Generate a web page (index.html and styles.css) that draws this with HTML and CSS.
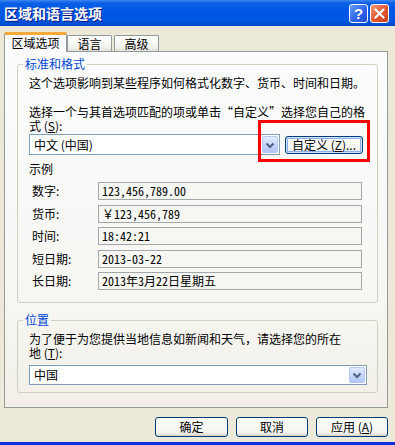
FILE: index.html
```html
<!DOCTYPE html>
<html lang="zh-CN">
<head>
  <meta charset="UTF-8" />
  <title>区域和语言选项</title>
  <link rel="stylesheet" href="styles.css">
</head>
<body>
  <div class="window">
    <div class="titlebar">
      <span class="title">区域和语言选项</span>
      <div class="title-buttons">
        <span class="tbtn help">?</span>
        <span class="tbtn close">
          <svg width="11" height="11" viewBox="0 0 11 11"><path d="M1.5 1.5 L9.5 9.5 M9.5 1.5 L1.5 9.5" stroke="#fff" stroke-width="2.2" stroke-linecap="round"/></svg>
        </span>
      </div>
    </div>

    <div class="content">
      <div class="tabs">
        <span class="tab active">区域选项</span>
        <span class="tab">语言</span>
        <span class="tab third">高级</span>
      </div>

      <div class="panel">
        <fieldset class="group first">
          <legend>标准和格式</legend>
          <p class="text">这个选项影响到某些程序如何格式化数字、货币、时间和日期。</p>
          <p class="text gap">选择一个与其首选项匹配的项或单击“自定义”选择您自己的格<br>式 (<u>S</u>):</p>
          <div class="combo-row">
            <div class="combo short">
              <span class="combo-text">中文 (中国)</span>
              <span class="arrow">
                <svg width="14" height="14" viewBox="0 0 14 14"><path d="M3.5 5.5 L7 9 L10.5 5.5" fill="none" stroke="#4d6185" stroke-width="2"/></svg>
              </span>
            </div>
            <button class="btn custom">自定义 (<u>Z</u>)...</button>
            <div class="mark"></div>
          </div>

          <div class="sample-title">示例</div>
          <div class="samples">
            <span class="label">数字:</span>
            <span class="field">123,456,789.00</span>
            <span class="label">货币:</span>
            <span class="field">￥123,456,789</span>
            <span class="label">时间:</span>
            <span class="field">18:42:21</span>
            <span class="label">短日期:</span>
            <span class="field">2013-03-22</span>
            <span class="label">长日期:</span>
            <span class="field">2013年3月22日星期五</span>
          </div>
        </fieldset>

        <fieldset class="group second">
          <legend>位置</legend>
          <p class="text">为了便于为您提供当地信息如新闻和天气，请选择您的所在<br>地 (<u>T</u>):</p>
          <div class="combo long">
            <span class="combo-text">中国</span>
            <span class="arrow">
              <svg width="14" height="14" viewBox="0 0 14 14"><path d="M3.5 5.5 L7 9 L10.5 5.5" fill="none" stroke="#4d6185" stroke-width="2"/></svg>
            </span>
          </div>
        </fieldset>
      </div>

      <div class="actions">
        <button class="btn">确定</button>
        <button class="btn">取消</button>
        <button class="btn">应用 (<u>A</u>)</button>
      </div>
    </div>
  </div>
</body>
</html>
```

FILE: styles.css
```css
body {
  margin: 0;
  font-family: "Noto Sans CJK SC", sans-serif;
  font-size: 12px;
  color: #000;
  background: #ece9d8;
}
.window {
  width: 395px;
  height: 445px;
  box-sizing: border-box;
  border-bottom: 3px solid #0831d9;
  background: #ece9d8;
  overflow: hidden;
}
.titlebar {
  height: 26px;
  display: flex;
  align-items: center;
  justify-content: space-between;
  padding: 0 6px 0 4px;
  background: linear-gradient(#3d86f4, #0a5fe4 12%, #0058e6 45%, #0055e0 80%, #0048c8);
}
.title {
  color: #fff;
  font-weight: bold;
  font-size: 14px;
  line-height: 16px;
  text-shadow: 1px 1px #0a1883;
}
.title-buttons {
  display: flex;
  gap: 2px;
  margin-top: 1px;
}
.tbtn {
  width: 19px;
  height: 19px;
  box-sizing: border-box;
  border: 1px solid #fff;
  border-radius: 3px;
  display: flex;
  align-items: center;
  justify-content: center;
  color: #fff;
}
.help {
  background: linear-gradient(135deg, #6a9cf8, #2a62e6 60%, #1f50d0);
  font: bold 15px "Liberation Sans", sans-serif;
}
.close {
  background: linear-gradient(135deg, #f09a78, #e0552d 55%, #c8401c);
}
.content {
  padding: 0 7px 0 4px;
}
.tabs {
  display: flex;
  align-items: flex-end;
  height: 19px;
  margin-top: 6px;
  position: relative;
  z-index: 1;
}
.tab {
  box-sizing: border-box;
  height: 16px;
  width: 45px;
  border: 1px solid #919b9c;
  border-bottom: none;
  border-radius: 2px 2px 0 0;
  background: linear-gradient(#ffffff, #f3f3ef 70%, #e4e2d8);
  text-align: center;
  line-height: 15px;
}
.tab.active {
  width: 63px;
  height: 20px;
  margin-bottom: -1px;
  border-top: 3px solid #f5a93c;
  background: #fcfcfe;
  line-height: 16px;
}
.tab.third {
  margin-left: 2px;
}
.panel {
  height: 357px;
  box-sizing: border-box;
  border: 1px solid #919b9c;
  background: linear-gradient(#fcfcfe, #f7f6f2 70%, #f1efe7);
  padding: 5px 9px 0 12px;
}
.group {
  margin: 0;
  border: 1px solid #d0d0bf;
  border-radius: 3px;
  padding: 5px 10px 12px 11px;
}
.group legend {
  color: #0046d5;
  line-height: 14px;
  padding: 0 2px;
  margin-left: -6px;
}
.group.second {
  margin-top: 10px;
  padding-bottom: 7px;
}
.text {
  margin: 0;
  line-height: 14px;
}
.text.gap {
  margin-top: 15px;
}
.combo-row {
  position: relative;
  display: flex;
  align-items: center;
  gap: 5px;
  margin-top: 1px;
}
.combo {
  box-sizing: border-box;
  height: 21px;
  border: 1px solid #7f9db9;
  background: #fff;
  display: flex;
  align-items: center;
  justify-content: space-between;
  padding: 1px 1px 1px 4px;
}
.combo.short {
  width: 251px;
}
.combo.long {
  width: 338px;
  height: 20px;
  margin-top: 5px;
}
.combo-text {
  line-height: 14px;
}
.arrow {
  width: 16px;
  height: 100%;
  box-sizing: border-box;
  border: 1px solid #b7c9f3;
  border-radius: 2px;
  background: linear-gradient(#e2eafd, #c3d3fa 60%, #b3c6f4);
  display: flex;
  align-items: center;
  justify-content: center;
}
.btn {
  box-sizing: border-box;
  height: 20px;
  width: 72px;
  padding: 0;
  border: 1px solid #003c74;
  border-radius: 3px;
  background: linear-gradient(#ffffff, #f4f4f0 80%, #d8d3c8);
  font: 12px "Noto Sans CJK SC", sans-serif;
  line-height: 14px;
  color: #000;
}
.btn.custom {
  width: 78px;
  height: 18px;
  box-shadow: inset 0 0 0 1px #cde2fc, inset 0 0 0 2px #8ab0f0;
}
.mark {
  position: absolute;
  left: 229px;
  top: -14px;
  width: 112px;
  height: 42px;
  box-sizing: border-box;
  border: 3px solid #f00;
}
.sample-title {
  line-height: 14px;
  margin-top: 7px;
}
.samples {
  display: grid;
  grid-template-columns: 66px 264px;
  row-gap: 4.5px;
  margin-top: 6px;
  padding-left: 3px;
  align-items: center;
}
.label {
  line-height: 14px;
}
.field {
  box-sizing: border-box;
  height: 18px;
  border: 1px solid #a3a7ab;
  background: #f6f6f3;
  padding-left: 3px;
  line-height: 16px;
  font-family: "Noto Sans Mono CJK SC", "Noto Sans CJK SC", monospace;
}
.actions {
  display: flex;
  justify-content: flex-end;
  gap: 8px;
  margin-top: 9px;
}
.actions .btn:first-child {
  width: 73px;
}
```
